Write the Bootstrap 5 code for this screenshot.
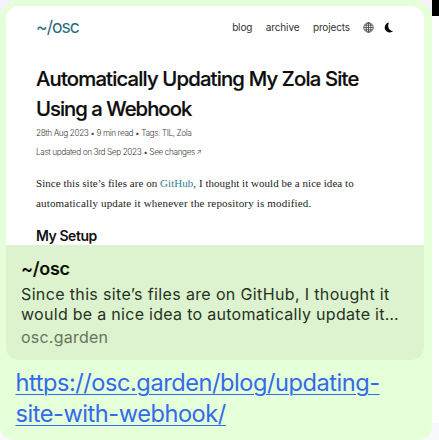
<!DOCTYPE html>
<html lang="en">
<head>
<meta charset="utf-8">
<meta name="viewport" content="width=device-width, initial-scale=1">
<title>~/osc link preview</title>
<link href="https://cdn.jsdelivr.net/npm/bootstrap@5.3.0/dist/css/bootstrap.min.css" rel="stylesheet">
<style>
html,body{height:440px;overflow:hidden}
body{font-family:Inter,"Liberation Sans",sans-serif;background:#fff;color:#161616}
.backdrop{width:439px;height:440px;background:linear-gradient(#f4f2f8 0 16px,#fff 16px 423px,#f8f9fc 423px)}
.bubble{width:432px;height:440px;background:#e5ffd8;border-radius:19px 19px 14px 14px;padding:6px 8px 0 6px}
.edge{width:7px;height:16px;background:#000}
.preview{height:354px;border-radius:13px;background:#ddf2ce}
.shot{height:239px;background:#fff;padding:0 30px}
.ln{display:block;white-space:nowrap}
.sitebar{height:43px}
.logo{font-size:17.5px;color:#2b6a80;line-height:41px;letter-spacing:-.95px}
.menu{font-size:10px;color:#333;line-height:43px;gap:13.5px;letter-spacing:-.13px}
.tools{gap:10.5px;margin-left:-1px}
.title{font-size:20.3px;font-weight:500;line-height:30px;margin:15px 0 0;color:#0c0c0c;-webkit-text-stroke:.2px #0c0c0c}
.title .ln:first-child{letter-spacing:-.83px}
.title .ln:last-child{letter-spacing:-.98px}
.meta{font-size:8.3px;line-height:18.5px;color:#444;font-weight:300}
.meta .ln{letter-spacing:-.43px}
.story{font-family:"Liberation Serif",serif;font-size:11px;line-height:19.5px;margin-top:13px;color:#1c1c1c}
.story .ln:first-child{letter-spacing:.04px}
.story .ln:last-child{letter-spacing:.17px}
.story a{color:#2f7f95}
.sub{font-size:14px;font-weight:600;line-height:20px;margin:12.5px 0 0;color:#111;letter-spacing:-.45px}
.caption-box{padding:12px 15px 0}
.cap-name{font-size:18px;font-weight:600;line-height:23px;color:#080f05;letter-spacing:-.3px}
.cap-text{font-size:16px;line-height:20.5px;color:#26331f;margin-top:3.5px}
.cap-text .ln:first-child{letter-spacing:.36px}
.cap-text .ln:last-child{letter-spacing:.29px}
.cap-host{font-size:16px;line-height:22px;color:#66755f;letter-spacing:.22px;margin-top:1px}
.url{font-size:23.6px;line-height:31.5px;color:#316bec;margin:6.5px 0 0 9.5px;text-underline-offset:3px;text-decoration-thickness:1.4px}
.url:hover{color:#316bec}
.url .ln{letter-spacing:-.46px}
</style>
<script src="https://cdn.jsdelivr.net/npm/bootstrap@5.3.0/dist/js/bootstrap.bundle.min.js"></script>
</head>
<body>
<div class="backdrop d-flex align-items-start">
 <main class="bubble flex-shrink-0">
  <article class="preview overflow-hidden">
   <div class="shot overflow-hidden">
    <header class="sitebar d-flex justify-content-between">
     <span class="logo">~/osc</span>
     <nav class="menu d-flex align-items-center">
      <span>blog</span><span>archive</span><span>projects</span>
      <span class="tools d-flex align-items-center">
      <svg width="11" height="11" viewBox="0 0 22 22" fill="none" stroke="#333" stroke-width="1.5"><circle cx="11" cy="11" r="9.5"/><ellipse cx="11" cy="11" rx="4.7" ry="9.5"/><path d="M11 1.5v19M1.5 11h19M3 6.5h16M3 15.5h16"/></svg>
      <svg width="10" height="11" viewBox="0 0 20 22" fill="#080808"><path d="M10 1A10 10 0 1 0 18.5 18C10 18.5 6 9 10 1Z"/></svg>
      </span>
     </nav>
    </header>
    <h1 class="title"><span class="ln">Automatically Updating My Zola Site</span><span class="ln">Using a Webhook</span></h1>
    <div class="meta"><span class="ln">28th Aug 2023 • 9 min read • Tags: TIL, Zola</span><span class="ln">Last updated on 3rd Sep 2023 • See changes <svg width="4.5" height="4.5" viewBox="0 0 10 10" fill="none" stroke="#444" stroke-width="1.5"><path d="M1 9 9 1M2 1h7v7"/></svg></span></div>
    <p class="story mb-0"><span class="ln">Since this site’s files are on <a class="text-decoration-none" href="#">GitHub</a>, I thought it would be a nice idea to</span><span class="ln">automatically update it whenever the repository is modified.</span></p>
    <h2 class="sub">My Setup</h2>
   </div>
   <div class="caption-box">
    <div class="cap-name">~/osc</div>
    <div class="cap-text"><span class="ln">Since this site’s files are on GitHub, I thought it</span><span class="ln">would be a nice idea to automatically update it…</span></div>
    <div class="cap-host">osc.garden</div>
   </div>
  </article>
  <a class="url d-block" href="#"><span class="ln">https://osc.garden/blog/updating-</span><span class="ln">site-with-webhook/</span></a>
 </main>
 <div class="edge"></div>
</div>
</body>
</html>
